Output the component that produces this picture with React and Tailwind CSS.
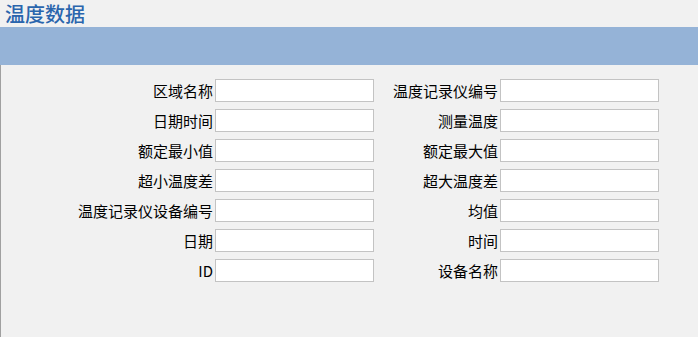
const rows = [
    ['区域名称', '温度记录仪编号'],
    ['日期时间', '测量温度'],
    ['额定最小值', '额定最大值'],
    ['超小温度差', '超大温度差'],
    ['温度记录仪设备编号', '均值'],
    ['日期', '时间'],
    ['ID', '设备名称'],
];

const font = { fontFamily: '"Noto Sans CJK SC", "Liberation Sans", sans-serif' };

function Field({ label, labelWidth }) {
    return (
        <div className="flex items-center">
            <label className={`${labelWidth} text-right text-[15px] leading-[23px] text-black pr-[2px]`}>
                {label}
            </label>
            <input
                type="text"
                className="w-[159px] h-[23px] bg-white border border-[#c3c3c3] outline-none"
            />
        </div>
    );
}

export default function App() {
    return (
        <div className="w-[698px] h-[337px] bg-[#f1f1f1] flex flex-col overflow-hidden" style={font}>
            <div className="pl-[5px] py-[1px] text-[20px] leading-[25px] font-medium text-[#2a65ad] whitespace-nowrap">
                温度数据
            </div>
            <div className="h-[38px] bg-[#95b3d7]" />
            <div className="flex-1 border-l border-[#a0a0a0] pt-[14px]">
                <div className="flex flex-col gap-[7px]">
                    {rows.map(([a, b]) => (
                        <div key={a} className="flex">
                            <Field label={a} labelWidth="w-[214px]" />
                            <Field label={b} labelWidth="w-[126px]" />
                        </div>
                    ))}
                </div>
            </div>
        </div>
    );
}
